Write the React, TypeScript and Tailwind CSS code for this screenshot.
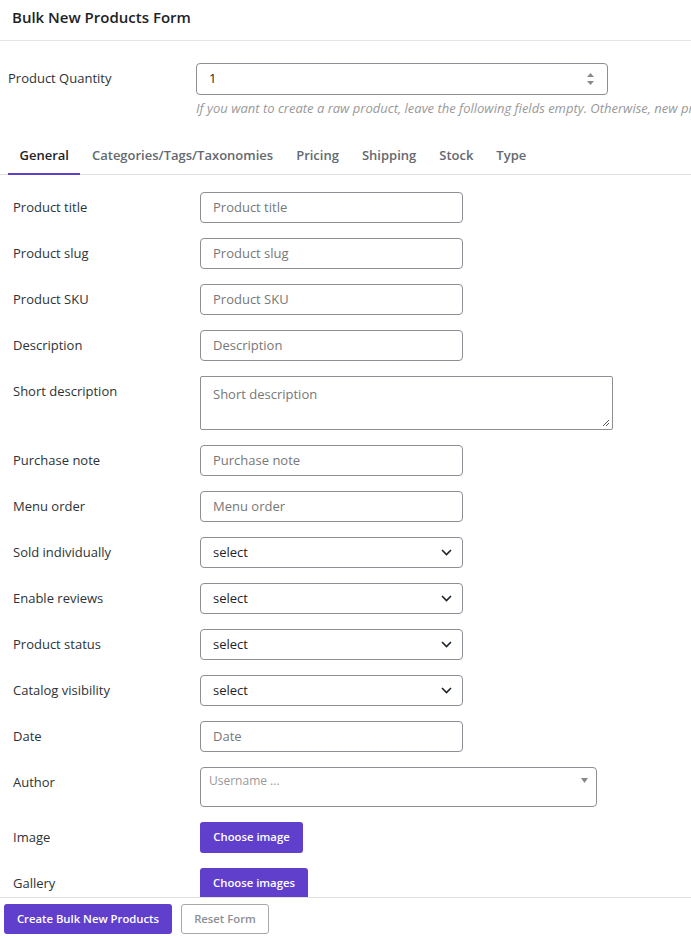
import React from "react";

const font = { fontFamily: '"Open Sans", "Noto Sans", sans-serif' };

function Label({ children }: { children: React.ReactNode }) {
  return (
    <div className="w-[187px] shrink-0 pt-[6px] text-[13px] leading-[18px] text-[#2c3338]">
      {children}
    </div>
  );
}

function TextInput({ placeholder }: { placeholder: string }) {
  return (
    <div className="w-[263px] h-[31px] border border-[#8c8f94] rounded-[4px] px-3 flex items-center text-[13px] text-[#777]">
      {placeholder}
    </div>
  );
}

function Select() {
  return (
    <div className="w-[263px] h-[31px] border border-[#8c8f94] rounded-[4px] pl-3 pr-[10px] flex items-center justify-between text-[13px] text-[#1d2327]">
      <span>select</span>
      <svg width="11" height="7" viewBox="0 0 11 7" fill="none">
        <path d="M1 1l4.5 4.5L10 1" stroke="#1d2327" strokeWidth="1.6" />
      </svg>
    </div>
  );
}

function Row({ label, children }: { label: string; children: React.ReactNode }) {
  return (
    <div className="flex mb-[15px]">
      <Label>{label}</Label>
      {children}
    </div>
  );
}

export default function App() {
  const tabs = ["General", "Categories/Tags/Taxonomies", "Pricing", "Shipping", "Stock", "Type"];
  return (
    <div style={font} className="w-[691px] h-[938px] bg-white flex flex-col overflow-hidden">
      {/* Header */}
      <div className="h-[41px] shrink-0 border-b border-[#e5e5e5] px-3 flex items-center">
        <h1 className="text-[15px] font-semibold text-[#1d2327] -mt-[6px]">Bulk New Products Form</h1>
      </div>

      <div className="flex-1 overflow-hidden">
        {/* Quantity */}
        <div className="flex pl-2 pt-[22px]">
          <div className="w-[188px] shrink-0 pt-[6px] text-[13px] leading-[18px] text-[#2c3338]">
            Product Quantity
          </div>
          <div className="flex flex-col min-w-0">
            <div className="w-[412px] h-[32px] border border-[#8c8f94] rounded-[4px] pl-3 pr-[12px] flex items-center justify-between text-[13px] text-[#1d2327]">
              <span>1</span>
              <svg width="9" height="14" viewBox="0 0 9 14">
                <path d="M4.5 1L8 5H1z" fill="#8a8a8a" />
                <path d="M4.5 13L8 9H1z" fill="#8a8a8a" />
              </svg>
            </div>
            <p className="mt-[4px] text-[13px] italic text-[#999] whitespace-nowrap leading-[18px]">
              If you want to create a raw product, leave the following fields empty. Otherwise, new products will be created
            </p>
          </div>
        </div>

        {/* Tabs */}
        <div className="mt-[20px] flex px-2 border-b border-[#e2e2e2] h-[38px]">
          {tabs.map((t, i) => (
            <div
              key={t}
              className={
                "px-[11.5px] pt-[9px] text-[13px] font-semibold leading-[18px] " +
                (i === 0
                  ? "text-[#1d2327] border-b-2 border-[#5f3fcc] -mb-[1px]"
                  : "text-[#646970]")
              }
            >
              {t}
            </div>
          ))}
        </div>

        {/* Fields */}
        <div className="pl-[13px] pt-[17px]">
          <Row label="Product title">
            <TextInput placeholder="Product title" />
          </Row>
          <Row label="Product slug">
            <TextInput placeholder="Product slug" />
          </Row>
          <Row label="Product SKU">
            <TextInput placeholder="Product SKU" />
          </Row>
          <Row label="Description">
            <TextInput placeholder="Description" />
          </Row>
          <Row label="Short description">
            <div className="relative w-[413px] h-[54px] border border-[#8c8f94] rounded-[2px] px-3 pt-[8px] text-[13px] text-[#777]">
              Short description
              <svg className="absolute right-[2px] bottom-[2px]" width="8" height="8" viewBox="0 0 8 8">
                <path d="M7 1L1 7M7 4L4 7" stroke="#555" strokeWidth="1" />
              </svg>
            </div>
          </Row>
          <Row label="Purchase note">
            <TextInput placeholder="Purchase note" />
          </Row>
          <Row label="Menu order">
            <TextInput placeholder="Menu order" />
          </Row>
          <Row label="Sold individually">
            <Select />
          </Row>
          <Row label="Enable reviews">
            <Select />
          </Row>
          <Row label="Product status">
            <Select />
          </Row>
          <Row label="Catalog visibility">
            <Select />
          </Row>
          <Row label="Date">
            <TextInput placeholder="Date" />
          </Row>
          <Row label="Author">
            <div className="relative w-[397px] h-[40px] border border-[#8c8f94] rounded-[4px] pl-[8px] pt-[5px] text-[12px] leading-[16px] text-[#999]">
              Username ...
              <svg className="absolute right-[8px] top-[10px]" width="7" height="5" viewBox="0 0 7 5">
                <path d="M0 0h7L3.5 5z" fill="#888" />
              </svg>
            </div>
          </Row>
          <Row label="Image">
            <button className="h-[31px] w-[103px] rounded-[3px] bg-[#5f3fcc] text-white text-[11.3px] font-semibold">
              Choose image
            </button>
          </Row>
          <Row label="Gallery">
            <button className="h-[31px] w-[108px] rounded-[3px] bg-[#5f3fcc] text-white text-[11.3px] font-semibold">
              Choose images
            </button>
          </Row>
        </div>
      </div>

      {/* Footer */}
      <div className="shrink-0 h-[41px] border-t border-[#e2e2e2] bg-white flex items-start gap-[9px] pl-[4px] pt-[6px]">
        <button className="h-[30px] w-[168px] rounded-[3px] bg-[#5f3fcc] text-white text-[11.3px] font-semibold">
          Create Bulk New Products
        </button>
        <button className="h-[30px] w-[88px] rounded-[3px] border border-[#a7aaad] bg-white text-[#8c8f94] text-[11.3px] font-semibold">
          Reset Form
        </button>
      </div>
    </div>
  );
}
